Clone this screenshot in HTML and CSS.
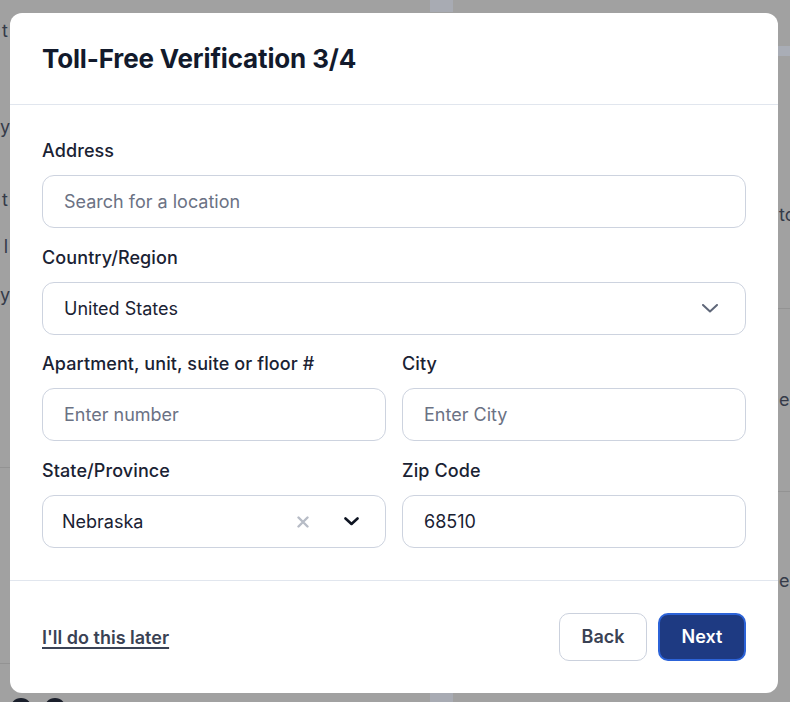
FILE: index.html
```html
<!DOCTYPE html>
<html lang="en">
<head>
<meta charset="utf-8">
<title>Toll-Free Verification</title>
<link rel="stylesheet" href="styles.css">
</head>
<body>
<div class="page">
  <div class="bg-left">
    <div class="frag f1">t</div>
    <div class="frag f2">y</div>
    <div class="frag f3">t</div>
    <div class="frag f4">l</div>
    <div class="frag f5">y</div>
    <div class="lline l1"></div>
    <div class="lline l2"></div>
  </div>
  <div class="bg-mid">
    <div class="strip"></div>
    <div class="strip"></div>
  </div>
  <div class="bg-right">
    <div class="band"></div>
    <div class="rrow r1">to</div>
    <div class="rrow r2">eg</div>
    <div class="rrow r3">er</div>
  </div>
</div>
<div class="dots">
  <span class="dot"></span><span class="dot"></span>
</div>

<div class="modal" role="dialog" aria-labelledby="title">
  <div class="modal-header">
    <h1 id="title" class="title">Toll-Free Verification 3/4</h1>
  </div>
  <div class="modal-body">
    <div class="field full">
      <label class="label">Address</label>
      <div class="input"><span class="placeholder">Search for a location</span></div>
    </div>
    <div class="field full">
      <label class="label">Country/Region</label>
      <div class="input select">
        <span class="value">United States</span>
        <svg class="chev-light" width="16" height="9" viewBox="0 0 16 9"><path d="M1 1 L8 7.5 L15 1" fill="none" stroke="#5f6779" stroke-width="2" stroke-linecap="round" stroke-linejoin="round"/></svg>
      </div>
    </div>
    <div class="field">
      <label class="label">Apartment, unit, suite or floor #</label>
      <div class="input"><span class="placeholder">Enter number</span></div>
    </div>
    <div class="field">
      <label class="label">City</label>
      <div class="input"><span class="placeholder">Enter City</span></div>
    </div>
    <div class="field">
      <label class="label">State/Province</label>
      <div class="input select state">
        <span class="value">Nebraska</span>
        <span class="icons">
          <svg class="clear" width="12" height="12" viewBox="0 0 12 12"><path d="M1.5 1.5 L10.5 10.5 M10.5 1.5 L1.5 10.5" fill="none" stroke="#b7bcc6" stroke-width="2.4" stroke-linecap="round"/></svg>
          <svg class="chev-dark" width="15" height="9" viewBox="0 0 15 9"><path d="M1.5 1.5 L7.5 7 L13.5 1.5" fill="none" stroke="#0e1422" stroke-width="2.6" stroke-linecap="round" stroke-linejoin="round"/></svg>
        </span>
      </div>
    </div>
    <div class="field">
      <label class="label">Zip Code</label>
      <div class="input"><span class="value">68510</span></div>
    </div>
  </div>
  <div class="modal-footer">
    <a class="later" href="#">I'll do this later</a>
    <div class="actions">
      <button class="btn btn-back" type="button">Back</button>
      <button class="btn btn-next" type="button">Next</button>
    </div>
  </div>
</div>
</body>
</html>
```
FILE: styles.css
```css
* { box-sizing: border-box; }

html, body {
  margin: 0;
  padding: 0;
  width: 790px;
  height: 702px;
  overflow: hidden;
}

body {
  background: #a1a1a1;
  font-family: "Inter", "Noto Sans", sans-serif;
  color: #1a2233;
  position: relative;
}

/* dimmed page behind the dialog */
.page {
  display: flex;
  height: 702px;
}

.bg-left {
  width: 10px;
  overflow: hidden;
  font-size: 18px;
  color: #353b49;
}

.frag {
  height: 24px;
  line-height: 24px;
  text-align: right;
  white-space: nowrap;
  margin-right: 2px;
}
.f1 { margin-top: 19px; }
.f2 { margin-top: 72px; }
.f3 { margin-top: 49px; }
.f4 { margin-top: 23px; }
.f5 { margin-top: 24px; }

.lline {
  height: 1px;
  background: #939393;
}
.l1 { margin-top: 160px; }
.l2 { margin-top: 195px; }

.bg-mid {
  flex: 1;
  display: flex;
  flex-direction: column;
  justify-content: space-between;
}
.strip {
  width: 23px;
  height: 12px;
  margin-left: 420px;
  background: #a8abb3;
}

.bg-right {
  width: 12px;
  overflow: hidden;
  font-size: 18px;
  color: #353b49;
}

.band {
  height: 10px;
  margin-top: 46px;
  background: #a9adb6;
}

.rrow {
  line-height: 24px;
  padding-left: 1px;
  white-space: nowrap;
  border-bottom: 1px solid #939393;
}
.r1 { padding-top: 147px; height: 253px; }
.r2 { padding-top: 79px; height: 183px; }
.r3 { padding-top: 77px; height: 183px; border-bottom: 0; }

.dots {
  position: absolute;
  left: 10px;
  top: 698px;
  display: flex;
  gap: 12px;
}
.dot {
  width: 22px;
  height: 22px;
  border-radius: 50%;
  background: #1a1f2b;
}

/* dialog */
.modal {
  position: absolute;
  left: 10px;
  top: 13px;
  width: 768px;
  height: 680px;
  background: #ffffff;
  border-radius: 12px;
  display: flex;
  flex-direction: column;
}

.modal-header {
  height: 92px;
  padding: 0 32px;
  display: flex;
  align-items: center;
  border-bottom: 1px solid #e1e6ee;
}

.title {
  margin: 0;
  font-size: 26px;
  font-weight: 700;
  color: #121a2c;
  letter-spacing: -0.15px;
}

.modal-body {
  padding: 34px 32px 32px;
  display: grid;
  grid-template-columns: 1fr 1fr;
  column-gap: 16px;
  row-gap: 17.5px;
  border-bottom: 1px solid #e1e6ee;
}

.field {
  display: flex;
  flex-direction: column;
  gap: 12px;
}
.field.full { grid-column: 1 / -1; }

.label {
  font-size: 18px;
  line-height: 24px;
  font-weight: 500;
  letter-spacing: 0.1px;
  color: #1a2233;
}

.input {
  height: 53px;
  border: 1px solid #cdd3df;
  border-radius: 12px;
  padding: 0 21px;
  display: flex;
  align-items: center;
  font-size: 18px;
  background: #fff;
}

.placeholder { color: #6b7284; }
.value { color: #1a2233; }

.select { justify-content: space-between; padding-right: 27px; }

.state { padding-left: 19px; padding-right: 26px; }
.icons {
  display: flex;
  align-items: center;
  gap: 35px;
}
.clear { margin-top: 1px; }

.modal-footer {
  flex: 1;
  padding: 0 32px;
  display: flex;
  align-items: center;
  justify-content: space-between;
}

.later {
  font-size: 18px;
  font-weight: 600;
  color: #3a4254;
  text-decoration: underline;
  text-underline-offset: 3px;
  text-decoration-thickness: 1.5px;
  margin-top: 1px;
}

.actions {
  display: flex;
  gap: 11px;
}

.btn {
  height: 48px;
  border-radius: 10px;
  font-family: "Inter", "Noto Sans", sans-serif;
  font-size: 18px;
  font-weight: 600;
  cursor: pointer;
}

.btn-back {
  width: 88px;
  background: #fff;
  border: 1px solid #cbd1dd;
  color: #3a4254;
}

.btn-next {
  width: 88px;
  background: #1e3a82;
  border: 2px solid #2c63d8;
  color: #ffffff;
}
```
